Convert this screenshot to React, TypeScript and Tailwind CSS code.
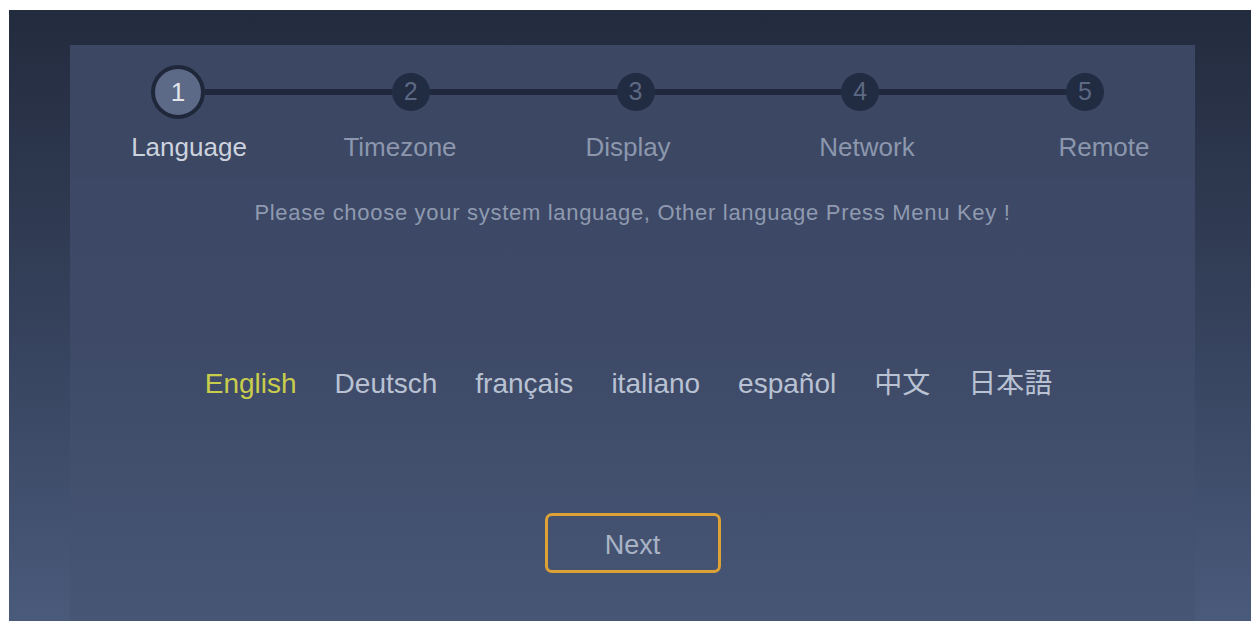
import React from "react";

const steps = [
  { n: "1", label: "Language", active: true, ml: "ml-[29px]" },
  { n: "2", label: "Timezone", active: false, ml: "ml-[31px]" },
  { n: "3", label: "Display", active: false, ml: "ml-[48px]" },
  { n: "4", label: "Network", active: false, ml: "ml-[59px]" },
  { n: "5", label: "Remote", active: false, ml: "ml-[57px]" },
];

const langs = ["English", "Deutsch", "français", "italiano", "español", "中文", "日本語"];

export default function App() {
  return (
    <div
      className="w-[1254px] h-[623px] bg-white pt-[10px] pl-[9px] pr-[3px] pb-[2px]"
      style={{ fontFamily: '"Liberation Sans", Arial, "Noto Sans CJK JP", sans-serif' }}
    >
      <div className="h-full w-full bg-gradient-to-b from-[#232b3e] via-[#35415b] to-[#4a5a7b] pt-[35px] pl-[61px] pr-[56px] flex">
        <div className="flex-1 min-w-0 flex flex-col bg-gradient-to-b from-[#3b4764] via-[#3d4966] to-[#475675]">
          {/* header / stepper */}
          <div className="h-[133px] bg-[#3b4763] flex flex-col">
            <div className="flex items-center pl-[81px] pr-[91px] pt-[20px]">
              {steps.map((s, i) => (
                <React.Fragment key={s.n}>
                  {i > 0 && <div className="flex-1 h-[6px] bg-[#1f283c]" />}
                  {s.active ? (
                    <div className="w-[54px] h-[54px] rounded-full bg-[#5c6987] border-[4px] border-[#1f283b] flex items-center justify-center text-[26px] text-[#e2e6ec]">
                      {s.n}
                    </div>
                  ) : (
                    <div className="w-[38px] h-[38px] rounded-full bg-[#212b41] flex items-center justify-center text-[25px] text-[#5d6983]">
                      {s.n}
                    </div>
                  )}
                </React.Fragment>
              ))}
            </div>
            <div className="flex mt-[13px]">
              {steps.map((s) => (
                <div
                  key={s.label}
                  className={`${s.ml} w-[180px] shrink-0 text-center text-[26px] leading-[30px] ${
                    s.active ? "text-[#cdd3de]" : "text-[#8c97ad]"
                  }`}
                >
                  {s.label}
                </div>
              ))}
            </div>
          </div>

          {/* body */}
          <div className="flex-1 flex flex-col items-center">
            <div className="mt-[22px] text-[22px] leading-[26px] text-[#8f9ab0] tracking-[0.7px]">
              Please choose your system language, Other language Press Menu Key !
            </div>
            <div className="mt-[142px] flex items-center gap-[38px] text-[28px] leading-[32px] text-[#b9c2d3] pr-[8px]">
              {langs.map((l, i) => (
                <span key={l} className={i === 0 ? "text-[#c9cd4c]" : ""}>
                  {l}
                </span>
              ))}
            </div>
            <div className="mt-[113px] w-[176px] h-[60px] rounded-[7px] border-[3px] border-[#dda235] flex items-center justify-center text-[27px] text-[#a9b3c6] pt-[4px]">
              Next
            </div>
          </div>
        </div>
      </div>
    </div>
  );
}
